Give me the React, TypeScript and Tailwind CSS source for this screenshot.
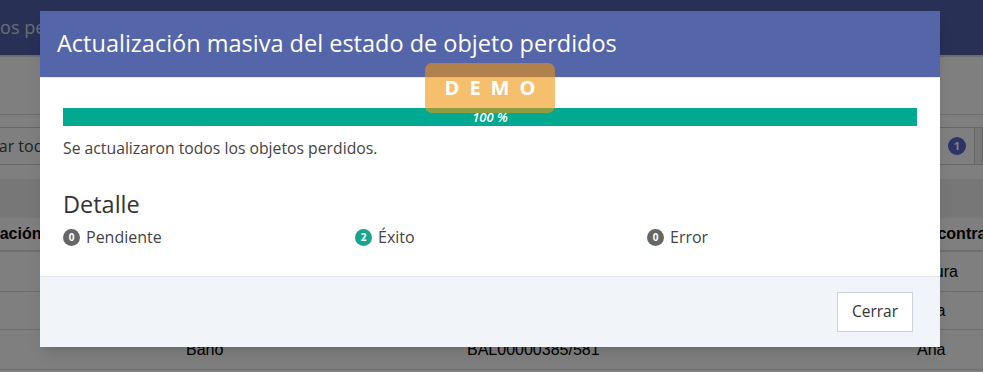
import React from 'react';

const rows = [
  { a: '', b: 'Recepción', c: 'BAL00000383/579', d: 'Laura' },
  { a: '', b: 'Restaurante', c: 'BAL00000384/580', d: 'Ana' },
  { a: '', b: 'Baño', c: 'BAL00000385/581', d: 'Ana' },
];

const Badge: React.FC<{ n: number; color: string }> = ({ n, color }) => (
  <span
    className={`inline-flex items-center justify-center w-[17px] h-[17px] rounded-full text-[10px] font-bold text-white leading-none ${color}`}
  >
    {n}
  </span>
);

const App: React.FC = () => {
  return (
    <div className="relative w-[983px] h-[372px] overflow-hidden bg-white font-['Open_Sans',sans-serif]">
      {/* Page behind the modal */}
      <div className="h-[55px] bg-[#5060ac] flex items-center">
        <span className="ml-[-46px] text-[18px] text-[#d6d9ea]">Objetos perdidos</span>
      </div>
      <div className="h-[2px] bg-[#d9d9d9]" />
      <div className="h-[58px] border-b border-[#dddddd]" />
      <div className="h-[12px]" />
      <div className="flex h-[38px]">
        <div className="flex-1 ml-[-72px] border border-[#cccccc] flex items-center pl-[12px] text-[16px] text-[#444444]">
          Actualizar todos
        </div>
        <div className="w-[35px] border border-l-0 border-[#cccccc] flex items-center justify-center">
          <span className="inline-flex items-center justify-center w-[18px] h-[18px] rounded-full bg-[#5867cc] text-white text-[11px] font-bold">
            1
          </span>
        </div>
        <div className="w-[8px] border border-l-0 border-[#cccccc] bg-[#eeeeee]" />
      </div>
      <div className="h-[14px]" />
      <div className="h-[39px] bg-[#eeeeee]" />
      <div className="ml-[-43px] font-['Liberation_Sans',Arial,sans-serif] text-[16px] text-black">
        <div className="grid grid-cols-[221px_281px_450px_200px] h-[34px] border-b-2 border-[#dddddd] items-center font-bold">
          <div className="px-[8px]">Ubicación</div>
          <div className="px-[8px]">Objeto</div>
          <div className="px-[8px]">Código</div>
          <div className="px-[8px]">Encontrado por</div>
        </div>
        {rows.map((r, i) => (
          <div
            key={i}
            className={`grid grid-cols-[221px_281px_450px_200px] items-center border-b border-[#dddddd] ${i === 1 ? 'h-[38px]' : 'h-[40px]'}`}
          >
            <div className="px-[8px]">{r.a}</div>
            <div className="px-[8px]">{r.b}</div>
            <div className="px-[8px]">{r.c}</div>
            <div className="px-[8px]">{r.d}</div>
          </div>
        ))}
      </div>

      {/* Backdrop */}
      <div className="absolute inset-0 bg-black/50" />

      {/* Modal */}
      <div className="absolute left-[40px] top-[11px] w-[900px] bg-white shadow-lg">
        <div className="h-[67px] bg-[#5565a9] flex items-center px-[17px] border-b border-[#e6e9f0]">
          <h2 className="text-[23.5px] text-white leading-none">
            Actualización masiva del estado de objeto perdidos
          </h2>
        </div>
        <div className="px-[23px] pt-[30px] pb-[28px]">
          <div className="h-[18px] bg-[#00a98f] flex items-center justify-center">
            <span className="text-[13px] italic font-semibold text-white leading-none">100 %</span>
          </div>
          <p className="mt-[11px] text-[15.75px] leading-[22px] text-[#444444]">
            Se actualizaron todos los objetos perdidos.
          </p>
          <h3 className="mt-[29px] text-[23.5px] leading-[32px] text-[#333333]">Detalle</h3>
          <div className="mt-[6px] grid grid-cols-[292px_292px_1fr] text-[16px] leading-[22px] text-[#444444]">
            <div className="flex items-center gap-[6px]">
              <Badge n={0} color="bg-[#666666]" />
              Pendiente
            </div>
            <div className="flex items-center gap-[6px]">
              <Badge n={2} color="bg-[#17a68d]" />
              Éxito
            </div>
            <div className="flex items-center gap-[6px]">
              <Badge n={0} color="bg-[#666666]" />
              Error
            </div>
          </div>
        </div>
        <div className="h-[71px] bg-[#f1f5f9] border-t border-[#e2e6ea] flex items-start justify-end pt-[15px] pr-[27px]">
          <button className="w-[76px] h-[40px] bg-white border border-[#ccd3dc] text-[15.5px] text-[#333333]">
            Cerrar
          </button>
        </div>

        {/* DEMO watermark */}
        <div className="absolute left-[385px] top-[52px] w-[130px] h-[50px] rounded-[7px] bg-[rgba(238,149,14,0.6)] flex items-center justify-center">
          <span className="text-[20px] font-bold text-white tracking-[0.5em] pl-[0.5em] leading-none">DEMO</span>
        </div>
      </div>
    </div>
  );
};

export default App;
